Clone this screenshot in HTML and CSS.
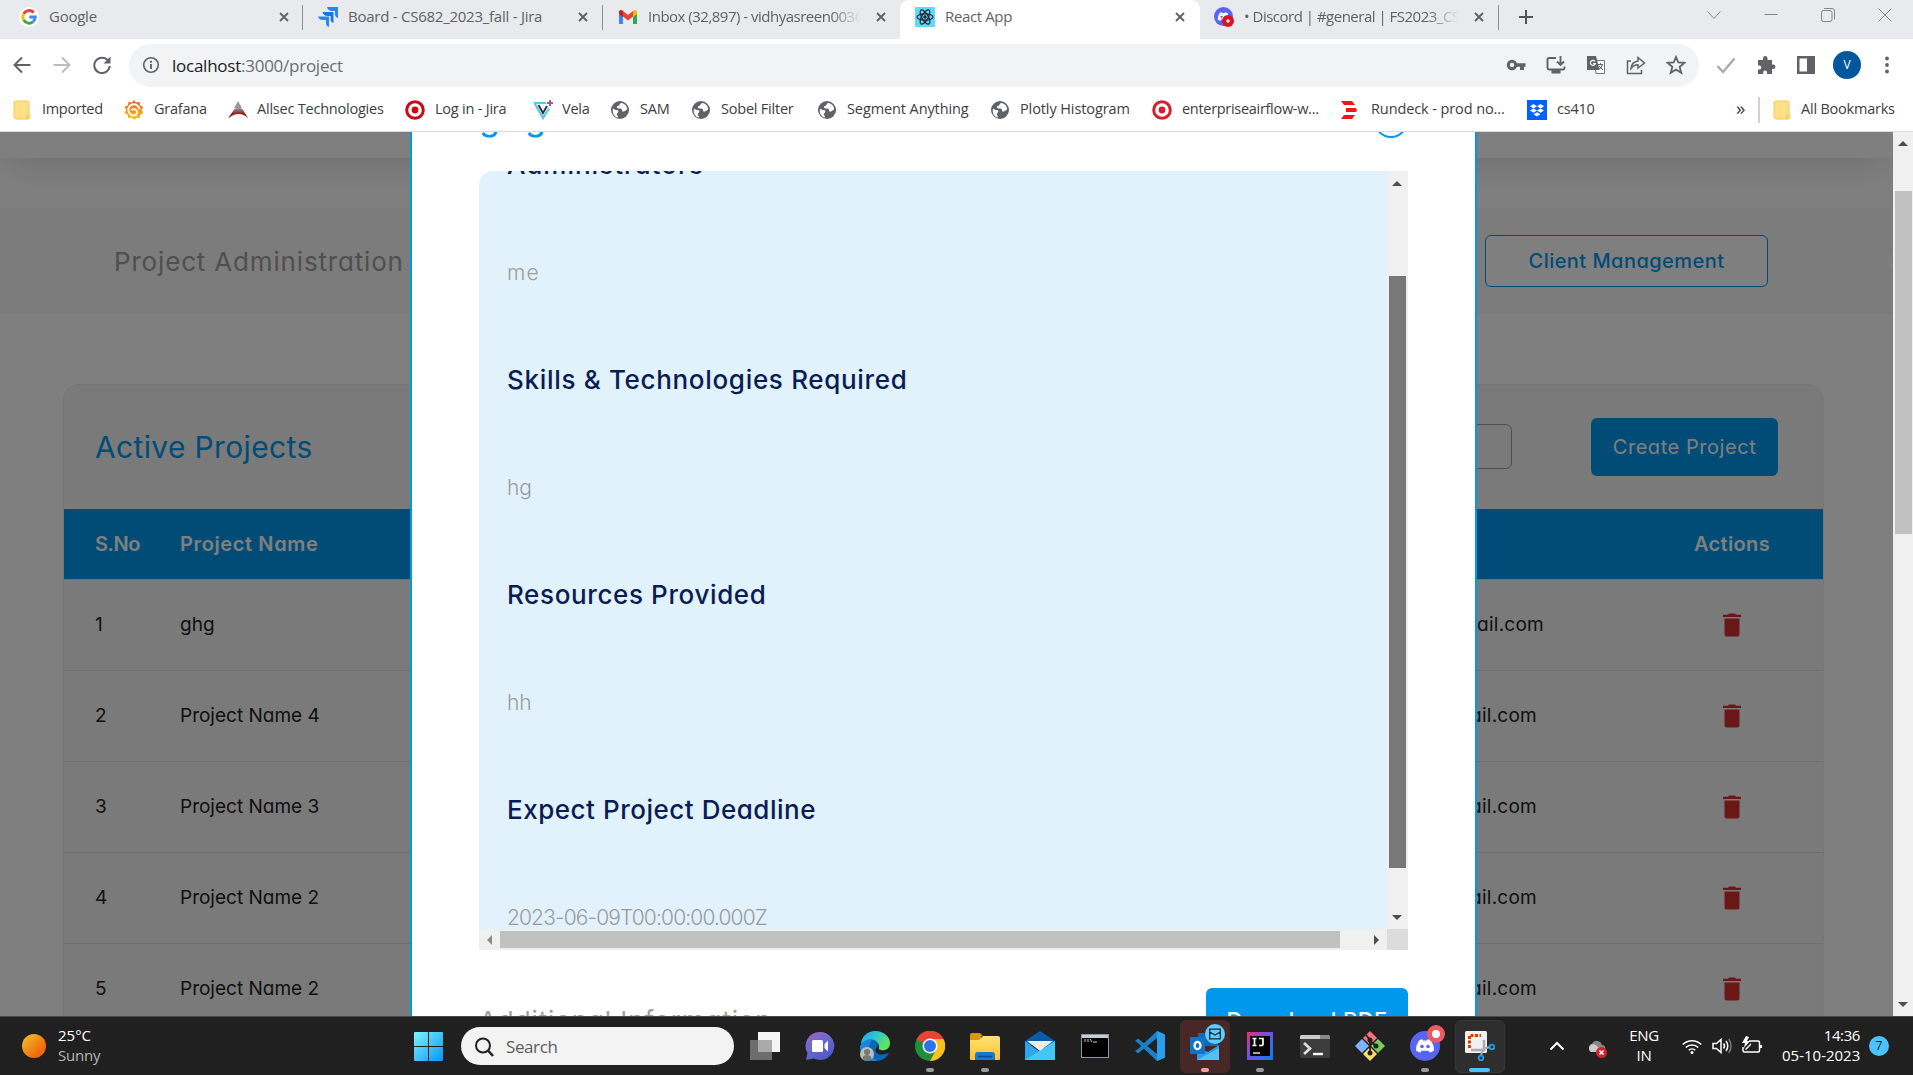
FILE: index.html
```html
<!DOCTYPE html>
<html lang="en">
<head>
<meta charset="utf-8">
<title>React App</title>
<link rel="stylesheet" href="styles.css">
</head>
<body>
<svg class="defs" width="0" height="0">
  <defs>
    <symbol id="close" viewBox="0 0 12 12"><path d="M2 2l8 8M10 2l-8 8" stroke="#5f6368" stroke-width="1.9"/></symbol>
    <symbol id="globe" viewBox="0 0 20 20"><circle cx="10" cy="10" r="9" fill="#5f6368"/><path d="M3 8.500c2 2 4 1 5 2s0 2-1 3 1 2 1 4C4 17 2 13 3 8.500zM11 3c-2 1-1 2.500-3 3s-1 2.500 1 2.500 3 0 3 2 3 1 5-1c.4-3-2-6-6-6.500z" fill="#fff"/></symbol>
    <symbol id="folder" viewBox="0 0 18 20"><path d="M1 3q0-2 2-2h11q2 0 2 2v11l1 1v2q0 2-2 2H3q-2 0-2-2z" fill="#ffe08a" stroke="#f3c94f"/><path d="M14 14v5" stroke="#e9b93b"/></symbol>
    <symbol id="target" viewBox="0 0 20 20"><circle cx="10" cy="10" r="8.300" fill="#fff" stroke="currentColor" stroke-width="3"/><circle cx="10" cy="10" r="3.400" fill="currentColor"/></symbol>
    <symbol id="trash" viewBox="0 0 18 24"><path d="M0 1.800h5L6 .5h6l1 1.300h5V4H0zM1.500 5.500h15V21q0 2.500-2.500 2.500H4Q1.500 23.500 1.500 21z" fill="#d32f2f"/></symbol>
    <symbol id="discord" viewBox="0 0 20 14"><path d="M4 1.500Q6 .3 7.500.3l.6 1.200h3.800l.6-1.200Q14 .3 16 1.500q3.300 5 3 10-2.500 2-4.500 2l-1-1.800H6.500l-1 1.800q-2 0-4.500-2-.3-5 3-10z" fill="#fff"/><circle cx="7" cy="7.500" r="1.800" fill="#5865f2"/><circle cx="13" cy="7.500" r="1.800" fill="#5865f2"/></symbol>
    <linearGradient id="win" x2="1" y2="1"><stop stop-color="#7df4fb"/><stop offset="1" stop-color="#0a95f5"/></linearGradient>
    <linearGradient id="chat" x2=".6" y2="1"><stop stop-color="#9a67b4"/><stop offset=".5" stop-color="#6b67cf"/><stop offset="1" stop-color="#5059c9"/></linearGradient>
    <linearGradient id="edge" x2="1" y2=".5"><stop stop-color="#1f9fe8"/><stop offset=".5" stop-color="#2fc6d8"/><stop offset="1" stop-color="#5ee65a"/></linearGradient>
    <linearGradient id="ij" x2="1" y2="1"><stop stop-color="#f0286e"/><stop offset=".4" stop-color="#7b4fd8"/><stop offset="1" stop-color="#087cfa"/></linearGradient>
    <linearGradient id="exp" x2="0" y2="1"><stop stop-color="#ffe07a"/><stop offset="1" stop-color="#ffc224"/></linearGradient>
    <linearGradient id="graf" x2="0" y2="1"><stop stop-color="#f05a28"/><stop offset="1" stop-color="#fbca0a"/></linearGradient>
    <linearGradient id="allsec" x2="0" y2="1"><stop stop-color="#999"/><stop offset=".5" stop-color="#8d2a2a"/><stop offset="1" stop-color="#800"/></linearGradient>
  </defs>
</svg>

<div class="tabs">
  <div class="tab tab-first">
    <svg class="favicon" viewBox="0 0 20 20"><circle cx="10" cy="10" r="10" fill="#fff"/><g fill="none" stroke-width="2.900"><path d="M14.800 5.500A6.300 6.300 0 0 0 4.700 6.900" stroke="#ea4335"/><path d="M4.700 6.900a6.300 6.300 0 0 0 0 6.200" stroke="#fbbc05"/><path d="M4.700 13.100A6.300 6.300 0 0 0 14 14.900" stroke="#34a853"/><path d="M14 14.900Q16.300 13 16.300 10H10.300" stroke="#4285f4"/></g></svg>
    <span class="tab-title w-google">Google</span><svg class="x"><use href="#close"/></svg>
  </div>
  <div class="tab">
    <svg class="favicon" viewBox="0 0 20 20"><path d="M9 0h11v11q-3-1-3-4V4h-3Q10 4 9 0z" fill="#2684ff"/><path d="M4.500 5h11v11q-3-1-3-4V9h-3q-4 0-5-4z" fill="#1d74ee"/><path d="M0 9.500h11v10.500q-3-1-3-4v-3H5q-4 0-5-3.500z" fill="#2684ff"/></svg>
    <span class="tab-title w-board">Board - CS682_2023_fall - Jira</span><svg class="x"><use href="#close"/></svg>
  </div>
  <div class="tab tab-mail">
    <svg class="favicon" viewBox="0 0 20 20"><path d="M1 5v12h4V8z" fill="#4285f4"/><path d="M19 5v12h-4V8z" fill="#34a853"/><path d="M1 4.500Q2 2 5 4l5 4 5-4v5.500l-5 4-5-4-4-3z" fill="#ea4335"/><path d="M15 4q3-2 4 .5V7l-4 3z" fill="#fbbc04"/><path d="M1 5v2l4 3V4Q2 2 1 5z" fill="#c5221f"/></svg>
    <span class="tab-title fade">Inbox (32,897) - vidhyasreen0036</span><svg class="x"><use href="#close"/></svg>
  </div>
  <div class="tab tab-active">
    <svg class="favicon" viewBox="0 0 20 20"><rect width="20" height="20" rx="1" fill="#61dafb"/><g fill="none" stroke="#20232a" stroke-width="1.200"><ellipse cx="10" cy="10" rx="8" ry="3.200"/><ellipse cx="10" cy="10" rx="8" ry="3.200" transform="rotate(60 10 10)"/><ellipse cx="10" cy="10" rx="8" ry="3.200" transform="rotate(120 10 10)"/></g><circle cx="10" cy="10" r="1.700" fill="#20232a"/></svg>
    <span class="tab-title w-react">React App</span><svg class="x"><use href="#close"/></svg>
  </div>
  <div class="tab tab-discord">
    <svg class="favicon" viewBox="0 0 20 20"><circle cx="9.500" cy="9.500" r="9.500" fill="#5865f2"/><use href="#discord" x="3" y="5" width="13" height="9"/><circle cx="14" cy="14" r="6" fill="#e01020"/><circle cx="14" cy="14" r="1.700" fill="#fff"/></svg>
    <span class="tab-title fade">• Discord | #general | FS2023_CS</span><svg class="x"><use href="#close"/></svg>
  </div>
  <svg class="plus" viewBox="0 0 16 16"><path d="M8 1v14M1 8h14" stroke="#505357" stroke-width="2"/></svg>
  <div class="window-controls">
    <svg viewBox="0 0 14 14"><path d="M.5 3.500L7 10.500l6.500-7"/></svg>
    <svg viewBox="0 0 14 14"><path d="M.5 6.500h13"/></svg>
    <svg viewBox="0 0 14 14"><rect x=".5" y="2.500" width="10.500" height="11" rx="2"/><path d="M3 .5h8q2.500 0 2.500 2.500v8.500"/></svg>
    <svg viewBox="0 0 14 14"><path d="M.5.5l13 13M13.500.5l-13 13"/></svg>
  </div>
</div>

<div class="toolbar">
  <svg class="nav" viewBox="0 0 20 20"><path d="M18.500 10H3M10 2.500L2.500 10l7.500 7.500"/></svg>
  <svg class="nav dim" viewBox="0 0 20 20"><path d="M1.500 10H17M10 2.500l7.500 7.500-7.500 7.500"/></svg>
  <svg class="nav" viewBox="0 0 20 20"><path d="M16 5.500A7.700 7.700 0 1 0 17.700 11"/><path d="M18.500 1.500v7h-7z" fill="#5f6368" stroke="none"/></svg>
  <div class="omnibox">
    <svg class="info" viewBox="0 0 18 18"><circle cx="9" cy="9" r="7.300" fill="none" stroke="#5f6368" stroke-width="1.600"/><path d="M9 8v5M9 4.700v2" stroke="#5f6368" stroke-width="1.900"/></svg>
    <span class="url">localhost<span>:3000/project</span></span>
    <div class="omni-icons">
      <svg viewBox="0 0 20 20"><circle cx="6" cy="10" r="3.700" fill="none" stroke="#5f6368" stroke-width="3"/><path d="M9 8.300h10.500v3.400H18V15h-4v-3.300H9z" fill="#5f6368"/></svg>
      <svg viewBox="0 0 20 20"><path d="M10 3H3q-1.500 0-1.500 1.500V13q0 1.500 1.500 1.500h14q1.500 0 1.500-1.500v-1.500M14.500 1v8M11 6.500l3.500 3.500L18 6.500" fill="none" stroke="#5f6368" stroke-width="1.900"/><path d="M5.500 15h9v3.500h-9z" fill="#5f6368"/></svg>
      <svg viewBox="0 0 20 20"><path d="M8 5.500h10.500v13H10z" fill="#fff" stroke="#777" stroke-width="1"/><path d="M1 1h9l3.500 14H1z" fill="#5f6368"/><path d="M9 6.500A2.500 2.500 0 1 0 9.300 8.500H7" fill="none" stroke="#fff" stroke-width="1.200"/><path d="M12 9.500h5M14.500 8v1.500M16.500 9.500q-1 4-4 5M13 11l4 4" fill="none" stroke="#5f6368"/></svg>
      <svg viewBox="0 0 20 20"><path d="M5 6H1.500v12.500h14V15" fill="none" stroke="#5f6368" stroke-width="1.500"/><path d="M12 2.500L18.500 8 12 13v-3.200q-4.500 0-7 3.700.5-6.500 7-7.500z" fill="none" stroke="#5f6368" stroke-width="1.500"/></svg>
      <svg viewBox="0 0 20 20"><path d="M10 2l2.300 5.500 6 .4-4.600 3.900 1.500 5.900L10 14.500l-5.200 3.200 1.500-5.900L1.700 7.900l6-.4z" fill="none" stroke="#5f6368" stroke-width="1.800"/></svg>
    </div>
  </div>
  <div class="ext">
    <svg viewBox="0 0 20 20"><path d="M1.500 11l5.500 6L18.500 3.500" fill="none" stroke="#a9abad" stroke-width="2.400"/></svg>
    <svg viewBox="0 0 20 20"><path d="M2 5h5V3.300a2.200 2.200 0 0 1 4.500 0V5H16v4.500h1.200a2.200 2.200 0 0 1 0 4.500H16v5h-5v-1.500a1.900 1.900 0 0 0-3.800 0V19H2v-4.500h1.300a2 2 0 0 0 0-4H2z" fill="#5f6368"/></svg>
    <svg viewBox="0 0 20 20"><path d="M1 1h18v18H1zM3.500 3.500v13H11v-13z" fill="#5f6368" fill-rule="evenodd"/></svg>
    <span class="avatar">V</span>
    <svg viewBox="0 0 20 20"><g fill="#5f6368"><circle cx="10" cy="3.500" r="1.900"/><circle cx="10" cy="10" r="1.900"/><circle cx="10" cy="16.500" r="1.900"/></g></svg>
  </div>
</div>

<div class="bookmarks">
  <div class="bm b1"><svg><use href="#folder"/></svg><span>Imported</span></div>
  <div class="bm b2"><svg viewBox="0 0 20 20"><path d="M10 0l2 2.500 3.500-.8.700 3.500 3 1.800-1.500 3 1.500 3-3 1.800-.3 3.300-3.500-.4-2.400 2.300-2.300-2.400-3.500.6-.5-3.400L.5 13l1.700-3L.5 6.700 4 5.200l.5-3.500L8 2.500z" fill="url(#graf)"/><path d="M15.500 9.500A5.600 5.600 0 1 0 10 15.500a3.200 3.200 0 1 0-2.500-5.400" fill="none" stroke="#fff" stroke-width="1.900"/></svg><span>Grafana</span></div>
  <div class="bm b3"><svg viewBox="0 0 20 20"><path d="M10 1l4 7-4 1-4-1z" fill="#999"/><path d="M6 9.500q4-2.500 8.500-.5L20 18q-9-8-20 .5z" fill="url(#allsec)"/></svg><span>Allsec Technologies</span></div>
  <div class="bm b4"><svg class="c-red"><use href="#target"/></svg><span>Log in - Jira</span></div>
  <div class="bm b5"><svg viewBox="0 0 20 20"><path d="M1 3h12M1.500 3L10 18l6-9.500" fill="none" stroke="#5cc8e8" stroke-width="2.200"/><path d="M5.500 5l4.500 8 4-7" fill="none" stroke="#28333d" stroke-width="1.900"/><path d="M17 0v6M14 3h6" stroke="#8f5cb0" stroke-width="2"/></svg><span>Vela</span></div>
  <div class="bm b6"><svg><use href="#globe"/></svg><span>SAM</span></div>
  <div class="bm b7"><svg><use href="#globe"/></svg><span>Sobel Filter</span></div>
  <div class="bm b8"><svg><use href="#globe"/></svg><span>Segment Anything</span></div>
  <div class="bm b9"><svg><use href="#globe"/></svg><span>Plotly Histogram</span></div>
  <div class="bm b10"><svg class="c-red2"><use href="#target"/></svg><span>enterpriseairflow-w...</span></div>
  <div class="bm b11"><svg viewBox="0 0 20 20"><path d="M0 1h11l3 4H3zM5 8h10l1 2-1 2H5zM3 15h11l-3 4H0z" fill="#f5141c"/></svg><span>Rundeck - prod no...</span></div>
  <div class="bm b12"><svg viewBox="0 0 20 20"><path d="M0 0h20v20H0z" fill="#0061ff"/><path d="M6.500 4L10 6.200 13.500 4 17 6.200l-3.500 2.200L17 10.600l-3.500 2.200L10 10.600l-3.500 2.200L3 10.600l3.500-2.200L3 6.200zM10 6.200L6.500 8.400 10 10.600l3.500-2.200zM10 12.200l3.500 2.100L10 16.500l-3.500-2.200z" fill="#fff" fill-rule="evenodd"/></svg><span>cs410</span></div>
  <span class="more">»</span>
  <div class="bm b13"><svg><use href="#folder"/></svg><span>All Bookmarks</span></div>
</div>

<div class="viewport">
  <main class="page">
    <div class="site-header"></div>
    <div class="subheader">
      <h1>Project Administration</h1>
      <span class="outline-btn">Client Management</span>
    </div>
    <section class="card">
      <div class="card-head">
        <h2>Active Projects</h2>
        <span class="search-input"></span>
        <span class="create-btn">Create Project</span>
      </div>
      <div class="row thead"><span class="sno">S.No</span><span class="pname">Project Name</span><span class="mail"></span><span class="act">Actions</span></div>
      <div class="row"><span>1</span><span>ghg</span><span class="mail wide">user@gmail.com</span><svg><use href="#trash"/></svg></div>
      <div class="row"><span>2</span><span>Project Name 4</span><span class="mail">user@gmail.com</span><svg><use href="#trash"/></svg></div>
      <div class="row"><span>3</span><span>Project Name 3</span><span class="mail">user@gmail.com</span><svg><use href="#trash"/></svg></div>
      <div class="row"><span>4</span><span>Project Name 2</span><span class="mail">user@gmail.com</span><svg><use href="#trash"/></svg></div>
      <div class="row"><span>5</span><span>Project Name 2</span><span class="mail">user@gmail.com</span><svg><use href="#trash"/></svg></div>
    </section>
  </main>
  <div class="page-scroll"><i class="up"></i><b></b><i class="down"></i></div>
  <div class="backdrop">
    <div class="modal">
      <div class="modal-head"><h2>ghg</h2><span class="modal-close"></span></div>
      <div class="panel">
        <div class="panel-body">
          <section><h3 class="l-adm">Administrators</h3><p class="l-me">me</p></section>
          <section><h3>Skills &amp; Technologies Required</h3><p>hg</p></section>
          <section><h3 class="l-res">Resources Provided</h3><p>hh</p></section>
          <section><h3 class="l-dead">Expect Project Deadline</h3><p class="l-date">2023-06-09T00:00:00.000Z</p></section>
        </div>
        <div class="vscroll"><i class="up"></i><b></b><i class="down"></i></div>
        <div class="hscroll"><i class="left"></i><b></b><i class="right"></i></div>
        <div class="corner"></div>
      </div>
      <div class="modal-foot"><span class="info-label">Additional Information</span><span class="download">Download PDF</span></div>
    </div>
  </div>
</div>

<div class="taskbar">
  <div class="weather">
    <span class="sun"></span>
    <div class="lift"><div class="temp">25°C</div><div class="cond">Sunny</div></div>
  </div>
  <svg class="start" viewBox="0 0 29 29"><path d="M1 0h13v14H0V1q0-1 1-1zM15 0h13q1 0 1 1v13H15zM0 15h14v14H1q-1 0-1-1zM15 15h14v13q0 1-1 1H15z" fill="url(#win)"/></svg>
  <div class="search"><svg viewBox="0 0 20 20"><circle cx="9" cy="8.500" r="7" fill="none" stroke="#222" stroke-width="2"/><path d="M14 13.500l5 5.500" stroke="#222" stroke-width="2.600"/></svg><span>Search</span></div>
  <div class="apps">
    <span><svg viewBox="0 0 30 30"><path d="M0 9h22v20H0z" fill="#6d6d6d"/><path d="M8 1h22v20H8z" fill="#f4f4f4"/><path d="M8 9h14v12H8z" fill="#aaa"/></svg></span>
    <span><svg viewBox="0 0 30 30"><path d="M15 1a14 14 0 1 1-6 26.500L1 29l1.500-7A14 14 0 0 1 15 1z" fill="url(#chat)"/><rect x="7" y="9" width="11" height="12" rx="1.500" fill="#fff"/><path d="M19.500 13l3.500-3.500v11L19.500 17z" fill="#fff"/></svg></span>
    <span><svg viewBox="0 0 30 30"><path d="M1 14C1 5 8 0 15 0c9 0 15 6 15 12 0 6-5 8-9 7-3-.5-2-2-2-4 0-5-9-8-18-1z" fill="url(#edge)"/><path d="M0 15q7-9 14-6c5 2 5 6 2 8-2 4 2 8 9 6l4-1q-4 8-13 8Q0 29 0 15z" fill="#0c64b5"/><path d="M0 15q6-8 12-6-5 6-1 13 3 6 6 8Q0 31 0 15z" fill="#1587dc"/><circle cx="7" cy="23" r="7" fill="#bdbdbd"/><circle cx="7" cy="21" r="3" fill="#777"/><path d="M2.500 28q0-4 4.500-4t4.500 4Q7 32 2.500 28z" fill="#777"/></svg></span>
    <span class="run"><svg viewBox="0 0 30 30"><circle cx="15" cy="15" r="15" fill="#1e8e3e"/><path d="M1.500 8.500A15 15 0 0 1 28.500 8H15v7z" fill="#ea4335"/><path d="M28.500 8A15 15 0 0 1 15 30l6.500-12L15 8z" fill="#fcc21b"/><circle cx="15" cy="15" r="7.500" fill="#fff"/><circle cx="15" cy="15" r="6" fill="#2b72e8"/></svg></span>
    <span class="run"><svg viewBox="0 0 30 30"><path d="M0 4q0-2 2-2h8l3 3h-2v6H0z" fill="#d99a00"/><path d="M0 9h9l4-4h15q2 0 2 2v21q0 1-1 1H1q-1 0-1-1z" fill="url(#exp)"/><path d="M5 29v-5q0-3 3-3h14q3 0 3 3v5z" fill="#1678cf"/><path d="M8 25.500h14" stroke="#0b4d92" stroke-width="1.500"/></svg></span>
    <span><svg viewBox="0 0 30 30"><path d="M0 10L15 0l15 10v4H0z" fill="#0a5cab"/><path d="M0 10l15 11L30 10v19H0z" fill="#2ba7ea"/><path d="M0 29L30 10v19z" fill="#40c8f8"/><path d="M2 10h26L15 20z" fill="#eee"/></svg></span>
    <span><svg viewBox="0 0 30 30"><rect x="1.500" y="3.500" width="27" height="23" fill="#000" stroke="#8b98a5"/><path d="M2 4h26v3H2z" fill="#c8ced4"/><path d="M5 8v3M8 8v3M10 8l2 3M13 11h4" stroke="#ccc" stroke-width="1"/></svg></span>
    <span><svg viewBox="0 0 30 30"><path d="M22 0l7 3v24l-7 3L3 12 0 10l3-2.500L22 23V7L3 22.500 0 20l3-2z" fill="#1b80c8"/><path d="M22 0l8 3.500v23L22 30z" fill="#2a9fee"/></svg></span>
    <span class="run alert"><svg viewBox="0 0 30 30"><path d="M8 2h20v13H8z" fill="#1068b8"/><path d="M7 17l11 4 11-7v15H7z" fill="#2d9be8"/><path d="M7 29l22-12v12z" fill="#50c3f5"/><rect y="6" width="15" height="17" rx="1" fill="#1274c9"/><ellipse cx="7.500" cy="14.500" rx="3" ry="3.700" fill="none" stroke="#fff" stroke-width="2.200"/></svg><em class="mail-badge"><svg viewBox="0 0 12 12"><path d="M.7 1.200h10.600v9.600H.7zM.7 4L6 7l5.300-3" fill="none" stroke="#0d2b3d" stroke-width="1.300"/></svg></em></span>
    <span class="run"><svg viewBox="0 0 30 30"><path d="M2 1h26v28H2z" fill="url(#ij)"/><path d="M5 5h20v20H5z" fill="#050505"/><path d="M7.500 7.500h4M9.500 7.500v7M7.500 14.500h4M14 7.500h4v5.500q0 1.500-2 1.500h-2" fill="none" stroke="#fff" stroke-width="1.700"/><path d="M8 22h7" stroke="#fff" stroke-width="1.300"/></svg></span>
    <span><svg viewBox="0 0 30 30"><rect y="4" width="30" height="23" rx="1.500" fill="#3d3d3d"/><path d="M0 8V5.500Q0 4 1.500 4H20v4z" fill="#ccc"/><path d="M20 4h8.500Q30 4 30 5.500V8H20z" fill="#888"/><path d="M4 12l6 5.500L4 23" fill="none" stroke="#ddd" stroke-width="2.700"/><path d="M13 23h10" stroke="#fff" stroke-width="2.400"/></svg></span>
    <span><svg viewBox="0 0 30 30"><path d="M15 0l7 7-7 7-7-7z" fill="#f07575"/><path d="M7 8l7 7-7 7-7-7z" fill="#80b3ff"/><path d="M23 8l7 7-7 7-7-7z" fill="#7ec95c"/><path d="M15 16l7 7-7 7-7-7z" fill="#ffdc73"/><path d="M11 4l4 5v13M15 10l6 5" fill="none" stroke="#222" stroke-width="1.900"/><circle cx="15" cy="9" r="2.500" fill="#222"/><circle cx="15" cy="22" r="2.500" fill="#222"/><circle cx="21" cy="15" r="2.500" fill="#222"/></svg></span>
    <span class="run"><svg viewBox="0 0 30 30"><circle cx="15" cy="15" r="15" fill="#5865f2"/><use href="#discord" x="5" y="8" width="20" height="14"/></svg><em class="dot-badge"></em></span>
    <span class="run current"><svg viewBox="0 0 30 30"><rect y="0" width="22" height="22" rx="1.500" fill="#f1f1f1"/><path d="M4.500 17V4.500H16" fill="none" stroke="#d83b01" stroke-width="3" stroke-dasharray="3 1.500"/><path d="M6 19h13V9" fill="none" stroke="#a7adb3" stroke-width="2.500"/><path d="M18 18l-2 7M18 18l7-2" stroke="#a7adb3" stroke-width="2"/><circle cx="16" cy="27" r="2.300" fill="none" stroke="#1e9de8" stroke-width="1.800"/><circle cx="27" cy="16" r="2.300" fill="none" stroke="#1e9de8" stroke-width="1.800"/></svg></span>
  </div>
  <div class="tray">
    <svg class="t-chev" viewBox="0 0 24 20"><path d="M5.500 13.500L12 7l6.500 6.500" fill="none" stroke="#fff" stroke-width="2"/></svg>
    <svg class="t-cloud" viewBox="0 0 20 20"><path d="M4 13a4 4 0 0 1 1-7.500A5.500 5.500 0 0 1 15 7q4 0 3 5z" fill="#888"/><path d="M4 14a4 4 0 0 1 0-7q4-2 7 2l3 5z" fill="#ccc"/><circle cx="14.500" cy="14.500" r="5.500" fill="#d5232e"/><path d="M12.500 12.500l4 4m0-4l-4 4" stroke="#fff" stroke-width="1.500"/></svg>
    <div class="lang lift"><div>ENG</div><div>IN</div></div>
    <svg class="t-wifi" viewBox="0 0 20 20"><g fill="none" stroke="#fff" stroke-width="1.500"><path d="M.8 8.500a13 13 0 0 1 18.400 0M3.800 11.500a8.800 8.800 0 0 1 12.400 0M6.700 14.300a4.800 4.800 0 0 1 6.600 0"/></g><circle cx="10" cy="16.500" r="1.500" fill="#fff"/></svg>
    <svg class="t-vol" viewBox="0 0 20 20"><g fill="none" stroke="#fff" stroke-width="1.500"><path d="M1 7.500h3.500L9 3.500v13l-4.500-4H1zM11.500 7.500q2 2.500 0 5M14 5q3.500 5 0 10"/><path d="M16.800 3q4.500 7 0 14" stroke="#777"/></g></svg>
    <svg class="t-bat" viewBox="0 0 20 20"><path d="M7 5h9q1.500 0 1.500 1.500v8Q17.500 16 16 16H2.500Q1 16 1 14.500V11" fill="none" stroke="#fff" stroke-width="1.500"/><path d="M18 9h2v3h-2zM4 0L0 7h3l-1 5 6-7H5l2-4zM3 13l6-6v2l-5 5z" fill="#fff"/></svg>
    <div class="clock lift"><div>14:36</div><div>05-10-2023</div></div>
    <span class="notif">7</span>
  </div>
</div>
</body>
</html>
```
FILE: styles.css
```css
* { box-sizing: border-box; }
html, body { margin: 0; height: 100%; overflow: hidden; }
body {
  width: 1913px; height: 1075px;
  display: flex; flex-direction: column;
  background: #fff; color: #3c4043;
  font: 15px "Open Sans", "Noto Sans", sans-serif;
}
svg { display: block; flex: none; }
.defs { position: absolute; }
h1, h2, h3, p { margin: 0; font-weight: 400; }

/* tab strip */
.tabs { height: 39px; flex: none; display: flex; background: #e8eaed; }
.tab { position: relative; width: 300px; display: flex; align-items: center; padding: 0 14px 6px 15px; }
.tab-first { width: 303px; padding: 0 13px 6px 19px; }
.tab:nth-child(3) { width: 297px; padding-right: 13px; }
.tab-first::after, .tab:nth-child(2)::after, .tab-discord::after {
  content: ""; position: absolute; right: 0; top: 5px; width: 1px; height: 25px; background: #8a8d91;
}
.tab-active { background: #fff; border-radius: 9px 9px 0 0; }
.tab-discord { width: 299px; padding-left: 14px; }
.favicon { width: 20px; height: 20px; margin-right: 10px; }
.tab-title { flex: 1; overflow: hidden; white-space: nowrap; color: #5f6368; letter-spacing: -.25px; line-height: 24px; margin-top: -2px; }
.w-react { letter-spacing: -.37px; }
.fade { letter-spacing: -.5px; margin-right: 10px; -webkit-mask-image: linear-gradient(90deg, #000 84%, transparent 98%); mask-image: linear-gradient(90deg, #000 84%, transparent 98%); }
.x { width: 12px; height: 12px; }
.plus { width: 16px; height: 16px; margin: 9px 0 0 19px; }
.window-controls { margin: 8px 21px 0 auto; display: flex; gap: 43px; }
.window-controls svg { width: 14px; height: 14px; fill: none; stroke: #85888b; stroke-width: 1; }

/* toolbar */
.toolbar { height: 52px; flex: none; display: flex; align-items: center; padding-left: 12px; background: #fff; }
.nav { width: 20px; height: 20px; margin-right: 20px; fill: none; stroke: #5f6368; stroke-width: 2; }
.nav.dim { stroke: #babcbe; }
.nav:nth-child(3) { margin-right: 17px; }
.omnibox { width: 1570px; height: 43px; border-radius: 22px; background: #f1f3f4; display: flex; align-items: center; padding: 0 13px; }
.info { width: 18px; height: 18px; margin-right: 12px; }
.url { font-size: 17px; letter-spacing: -.25px; color: #202124; }
.url span { color: #6a6e73; }
.omni-icons { margin-left: auto; display: flex; gap: 20px; }
.omni-icons svg { width: 20px; height: 20px; }
.ext { display: flex; align-items: center; margin-left: 17px; gap: 20px; }
.ext svg { width: 20px; height: 20px; }
.avatar { width: 28px; height: 28px; margin: 0 -4px 0 -3px; border-radius: 50%; background: #01579b; color: #fff; font-size: 12px; line-height: 28px; text-align: center; }

/* bookmarks */
.bookmarks { height: 41px; flex: none; display: flex; align-items: center; padding: 0 0 3px 12px; border-bottom: 1px solid #dadce0; font-size: 14.500px; letter-spacing: -.22px; }
.bm { display: flex; align-items: center; white-space: nowrap; }
.bm > span { margin-top: -2px; }
.bm svg { width: 20px; height: 20px; margin-right: 10px; }
.b1 { width: 112px; letter-spacing: -.3px; } .b2 { width: 104px; } .b3 { width: 177px; } .b4 { width: 128px; } .b5 { width: 77px; }
.b6 { width: 81px; } .b7 { width: 126px; } .b8 { width: 173px; letter-spacing: -.1px; } .b9 { width: 162px; letter-spacing: -.1px; } .b10 { width: 189px; letter-spacing: -.3px; }
.b11 { width: 186px; letter-spacing: -.1px; } .b12 { width: 209px; }
.b3 > svg, .b5 > svg { margin-right: 9px; }
.more { width: 22px; font-size: 19px; line-height: 20px; padding-bottom: 4px; }
.b13 { border-left: 2px solid #cfd1d4; padding-left: 12px; height: 26px; }
.b13 > svg { margin-right: 9px; }
.c-red { color: #cc0a14; } .c-red2 { color: #d6202f; }

/* browser viewport */
.viewport { position: relative; height: 884px; flex: none; display: flex; overflow: hidden; background: #fff; font-family: Inter, sans-serif; font-feature-settings: "cv11"; }
.page { width: 1893px; overflow: hidden; }
/* the header is scrolled most of the way out of view */
.site-header { height: 126px; margin-top: -100px; box-shadow: 0 14px 40px -10px rgba(0, 0, 0, .15); }
.subheader {
  height: 106px; margin-top: 50px; padding: 0 125px 0 114px;
  display: flex; justify-content: space-between; align-items: center;
  background: radial-gradient(circle at 1897px 53px, #fff 9px, transparent 10px), #f8f8f8;
}
.subheader h1 { font-size: 26px; letter-spacing: .83px; color: #9f9f9f; }
.outline-btn { width: 283px; height: 52px; border: 1px solid #0098ed; border-radius: 6px; background: #fff; color: #0098ed; font-size: 20px; font-weight: 500; letter-spacing: .45px; line-height: 50px; text-align: center; }
.card { margin: 70px 69px 0 63px; border: 1px solid #ececec; border-radius: 16px; background: #f4f4f4; height: 760px; }
.card-head { height: 124px; padding: 0 45px 1px 31px; display: flex; align-items: center; }
.card-head h2 { font-size: 30px; letter-spacing: .35px; color: #0098ed; }
.search-input { width: 300px; height: 45px; margin: 0 79px 0 auto; border: 1px solid #9f9f9f; border-radius: 6px; }
.create-btn { width: 187px; height: 58px; border-radius: 6px; background: #0098ed; color: #fff; font-size: 20px; letter-spacing: .55px; line-height: 58px; text-align: center; }
.row { display: grid; grid-template-columns: 85px 1129px 1fr 100px; align-items: center; height: 91px; padding: 0 32px 2px 31px; border-bottom: 1px solid #dedede; color: #222; font-size: 19px; }
.row .mail { width: 228px; text-align: right; white-space: nowrap; letter-spacing: .25px; }
.row .wide { width: 235px; }
.row svg { width: 18px; height: 24px; margin: 2px 0 0 32px; }
.row.thead { height: 71px; padding-bottom: 0; background: #0098ed; color: #fff; font-size: 20px; font-weight: 600; letter-spacing: .62px; }
.thead .sno { letter-spacing: -.4px; }
.thead .act { letter-spacing: .34px; margin-left: 3px; }
.page-scroll { width: 20px; background: #f0f0f0; display: flex; flex-direction: column; align-items: center; }
.page-scroll b { width: 17px; height: 343px; margin: 45px 0 0 1px; background: #c1c1c1; }
.up, .down, .left, .right { border: 5px solid transparent; }
.up { border-top: 0; border-bottom-color: #4d4d4d; }
.down { border-bottom: 0; border-top-color: #4d4d4d; }
.left { border-left: 0; border-right-color: #8c8c8c; }
.right { border-right: 0; border-left-color: #4d4d4d; }
.page-scroll .up { margin-top: 9px; }
.page-scroll .down { margin: auto 0 9px; }

/* modal */
.backdrop { position: absolute; inset: 0 20px 0 0; overflow: hidden; background: rgba(0, 0, 0, .5); }
.modal { width: 1067px; height: 980px; margin: -40px 0 0 410px; padding: 0 67px; border: solid #0098ed; border-width: 0 2px; background: #fff; }
.modal-head { height: 79px; display: flex; justify-content: space-between; }
.modal-head h2 { color: #0098ed; font-size: 34px; line-height: 52px; letter-spacing: 2.500px; }
.modal-close { width: 34px; height: 34px; margin-top: 12px; border: 2px solid #0098ed; border-radius: 50%; }
.panel { width: 929px; height: 779px; display: grid; grid-template: 758px 21px / 908px 21px; border-radius: 14px 0 0 0; overflow: hidden; background: #e1f2fd; }
.panel-body { padding-left: 28px; overflow: hidden; }
.panel-body section { display: grid; grid-template-rows: 107.500px 107.500px; align-items: center; }
.panel-body section:first-child { margin-top: -60px; }
.panel h3 { font-size: 26px; font-weight: 500; letter-spacing: .68px; color: #0a1c54; }
.panel p { font-size: 21px; font-weight: 300; letter-spacing: 0; color: #9b9b9b; }
.panel .l-adm { letter-spacing: 1px; } .panel .l-res { letter-spacing: .62px; } .panel .l-dead { letter-spacing: .52px; }
.panel .l-me { letter-spacing: 1.200px; } .panel .l-date { letter-spacing: -.87px; }
.vscroll { background: #f0f0f0; display: flex; flex-direction: column; align-items: center; padding-right: 1px; }
.vscroll b { width: 17px; height: 592px; margin-top: 90px; background: #787878; }
.vscroll .up { margin-top: 10px; }
.vscroll .down { margin: auto 0 9px; }
.hscroll { background: #f0f0f0; display: flex; align-items: center; }
.hscroll b { width: 840px; height: 17px; margin-left: 8px; background: #c1c1c1; }
.hscroll .left { margin-left: 8px; }
.hscroll .right { margin: 0 8px 0 auto; }
.corner { background: #dcdcdc; }
.modal-foot { display: flex; justify-content: space-between; align-items: flex-start; padding-top: 38px; }
.info-label { font-size: 26px; letter-spacing: .9px; line-height: 30px; margin-top: 18px; color: #9f9f9f; }
.download { width: 202px; height: 64px; border-radius: 6px; background: #0098ed; color: #fff; font-size: 22px; font-weight: 500; letter-spacing: .5px; line-height: 64px; text-align: center; }

/* taskbar */
.taskbar { height: 59px; flex: none; display: flex; align-items: center; background: #202020; border-top: 1px solid #484848; color: #fff; font-size: 15px; line-height: 20px; }
.lift { margin-top: -3px; }
.weather { width: 414px; padding-left: 22px; display: flex; align-items: center; gap: 12px; }
.sun { width: 24px; height: 24px; border-radius: 50%; background: linear-gradient(135deg, #f2c230, #ef6a0c 75%); }
.cond { color: #b5b5b5; letter-spacing: -.2px; }
.start { width: 29px; height: 29px; margin-right: 18px; }
.search { width: 273px; height: 38px; border-radius: 19px; background: #f3f3f3; color: #5c5c5c; display: flex; align-items: center; padding: 1px 0 0 13px; font-size: 17px; letter-spacing: -.4px; }
.search svg { width: 20px; height: 20px; margin-right: 12px; }
.apps { display: flex; margin-left: 3px; }
.apps > span { position: relative; width: 55px; height: 54px; display: flex; align-items: center; justify-content: center; }
.apps > span > svg { width: 30px; height: 30px; }
.run::after { content: ""; position: absolute; bottom: 1px; left: 24px; width: 8px; height: 4px; border-radius: 2px; background: #9a9a9a; }
.apps .alert::before, .apps .current::before { content: ""; position: absolute; inset: 1px 2px 0 3px; border-radius: 6px; background: #482729; }
.apps .current::before { background: #2e2e2e; border: 1px solid #383838; }
.apps .alert > svg, .apps .current > svg { position: relative; }
.alert::after { background: #ff9aa4; }
.current::after { left: 17px; width: 21px; background: #4cc2ff; }
.mail-badge { position: absolute; left: 28px; top: 5px; width: 20px; height: 20px; border-radius: 50%; background: #60cdff; padding: 4px; }
.mail-badge svg { width: 12px; height: 12px; }
.dot-badge { position: absolute; left: 30px; top: 6px; width: 18px; height: 18px; border-radius: 50%; background: #fff; border: 5px solid #ee5a5f; }
.tray { display: flex; align-items: center; margin-left: 38px; }
.tray svg { width: 20px; height: 20px; }
.tray .t-chev { width: 24px; }
.tray .t-cloud { margin: 3px 22px 0 18px; }
.lang { width: 30px; text-align: center; margin-right: 23px; letter-spacing: -.3px; }
.tray .t-vol, .tray .t-bat { margin-left: 10px; }
.clock { width: 78px; margin-left: 20px; text-align: right; white-space: nowrap; }
.clock div:first-child { letter-spacing: -.4px; }
.notif { width: 20px; height: 20px; margin-left: 9px; border-radius: 50%; background: #4cc2ff; color: #10222c; font-size: 12px; text-align: center; }
```
